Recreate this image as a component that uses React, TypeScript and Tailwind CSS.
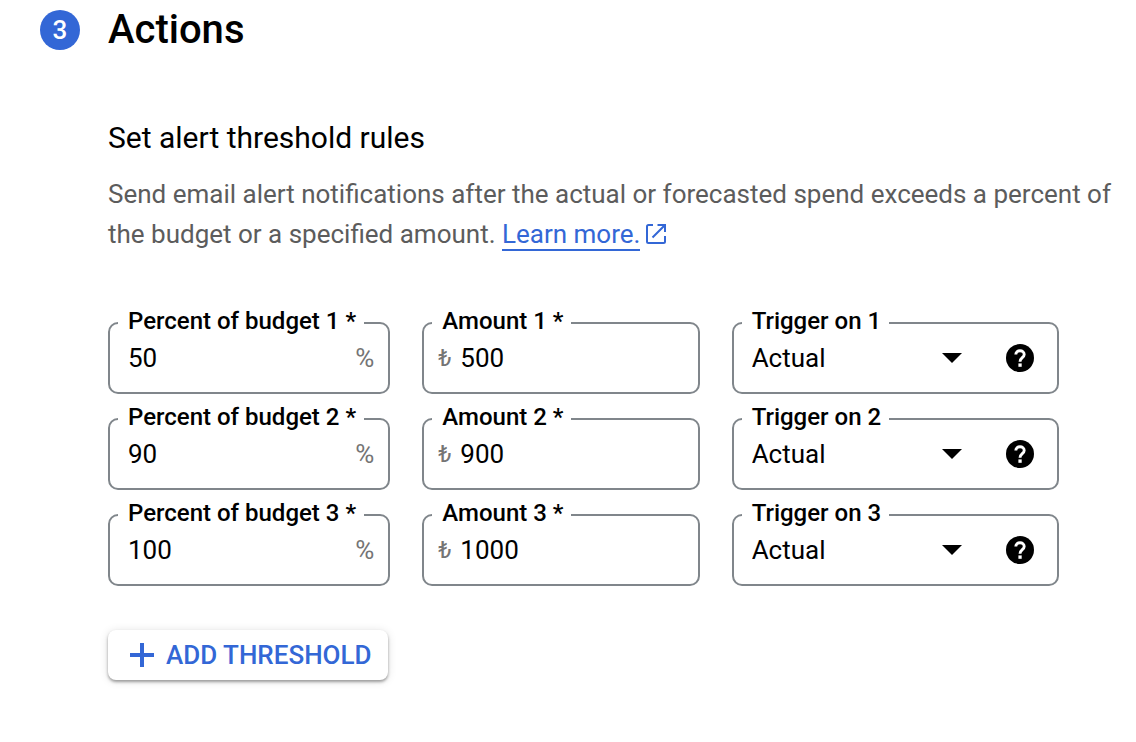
import React, { useState } from 'react'

const HelpIcon = () => (
  <svg viewBox="0 0 28 28" className="size-7" aria-hidden="true">
    <circle cx="14" cy="14" r="14" fill="currentColor" />
    <path d="M9.8 10.6C9.8 8.200 11.600 6.700 14 6.700s4.200 1.500 4.200 3.800c0 3.100-4.200 3.300-4.200 7.200" fill="none" stroke="#fff" strokeWidth="2.900" />
    <path d="M12.400 19.400h3.300v3.400h-3.300z" fill="#fff" />
  </svg>
)

const OpenInNewIcon = () => (
  <svg viewBox="0 0 20 20" className="ml-1.5 inline-block size-5 align-[-1px]" fill="none" stroke="currentColor" strokeWidth="2" aria-hidden="true">
    <path d="M7 1H2.5Q1 1 1 2.5v15Q1 19 2.5 19h15q1.500 0 1.500-1.500V12" />
    <path d="M11.500 1H19v7M19 1 6.500 13.500" />
  </svg>
)

const PlusIcon = () => (
  <svg viewBox="0 0 24 24" className="size-6" fill="currentColor" aria-hidden="true">
    <path d="M10 0h4v10h10v4H14v10h-4V14H0v-4h10z" />
  </svg>
)

interface FieldProps {
  id: string
  label: string
  children: React.ReactNode
}

const Field = ({ id, label, children }: FieldProps) => (
  <fieldset className="min-w-0 rounded-[10px] border-2 border-[#80868b] pb-[14px] pl-2 pr-[14px]">
    <legend className="pr-2 pb-1 pl-[10px] text-2xl leading-[26px] font-medium whitespace-nowrap">
      <label htmlFor={id}>{label}</label>
    </legend>
    <div className="flex h-10 items-center">{children}</div>
  </fieldset>
)

const initialRules = [
  { percent: '50', amount: '500', trigger: 'Actual' },
  { percent: '90', amount: '900', trigger: 'Actual' },
  { percent: '100', amount: '1000', trigger: 'Actual' }
]

const App = () => {
  const [rules, setRules] = useState(initialRules)

  const update = (index: number, key: 'percent' | 'amount' | 'trigger', value: string) => {
    setRules(rules.map((rule, i) => (i === index ? { ...rule, [key]: value } : rule)))
  }

  return (
    <main className="flex min-h-screen items-start gap-7 bg-white pt-2.5 pr-4 pb-12 pl-10 font-['Roboto',sans-serif] text-black">
      <div className="flex size-10 shrink-0 items-center justify-center rounded-full bg-[#3367d6] text-[26px] font-medium text-white">
        3
      </div>

      <div className="min-w-0 flex-1">
        <h1 className="text-[40px] leading-10 font-medium">Actions</h1>

        <h2 className="mt-[68px] text-[30px] leading-10">Set alert threshold rules</h2>
        <p className="mt-4 text-[26px] leading-10 text-[#5c5c5c]">
          Send email alert notifications after the actual or forecasted spend exceeds a percent of
          the budget or a specified amount.{' '}
          <a href="#learn-more" className="text-[#3367d6]">
            <span className="border-b-2 border-[#3367d6]">Learn more.</span>
            <OpenInNewIcon />
          </a>
        </p>

        <form className="mt-[54px]" onSubmit={(e) => e.preventDefault()}>
          <div className="flex max-w-[951px] flex-col gap-2.5">
            {rules.map((rule, i) => (
              <div key={i} className="grid grid-cols-[282fr_277fr_327fr] gap-8">
                <Field id={`percent-${i}`} label={`Percent of budget ${i + 1} *`}>
                  <input
                    id={`percent-${i}`}
                    className="min-w-0 flex-1 pl-[10px] text-[26px] outline-none"
                    value={rule.percent}
                    onChange={(e) => update(i, 'percent', e.target.value)}
                  />
                  <span className="text-[26px] text-[#757575]">%</span>
                </Field>

                <Field id={`amount-${i}`} label={`Amount ${i + 1} *`}>
                  <span className="w-7 pl-1.5 text-2xl text-[#757575]">₺</span>
                  <input
                    id={`amount-${i}`}
                    className="min-w-0 flex-1 text-[26px] outline-none"
                    value={rule.amount}
                    onChange={(e) => update(i, 'amount', e.target.value)}
                  />
                </Field>

                <Field id={`trigger-${i}`} label={`Trigger on ${i + 1}`}>
                  <div className="relative flex min-w-0 flex-1 items-center">
                    <select
                      id={`trigger-${i}`}
                      className="w-full appearance-none pl-[10px] text-[26px] outline-none"
                      value={rule.trigger}
                      onChange={(e) => update(i, 'trigger', e.target.value)}
                    >
                      <option>Actual</option>
                      <option>Forecasted</option>
                    </select>
                    <svg viewBox="0 0 20 10" className="pointer-events-none absolute right-0 h-2.5 w-5" aria-hidden="true">
                      <path d="M0 0h20L10 10z" />
                    </svg>
                  </div>
                  <button type="button" aria-label="Help" className="mr-[9px] ml-11">
                    <HelpIcon />
                  </button>
                </Field>
              </div>
            ))}
          </div>

          <button
            type="button"
            className="mt-11 flex h-[50px] items-center gap-3 rounded-lg bg-white pr-4 pl-[22px] text-[26px] font-medium text-[#3367d6] shadow-[0_2px_3px_rgba(0,0,0,0.35),0_1px_10px_rgba(0,0,0,0.12)]"
            onClick={() => setRules([...rules, { percent: '', amount: '', trigger: 'Actual' }])}
          >
            <PlusIcon />
            ADD THRESHOLD
          </button>
        </form>
      </div>
    </main>
  )
}

export default App
